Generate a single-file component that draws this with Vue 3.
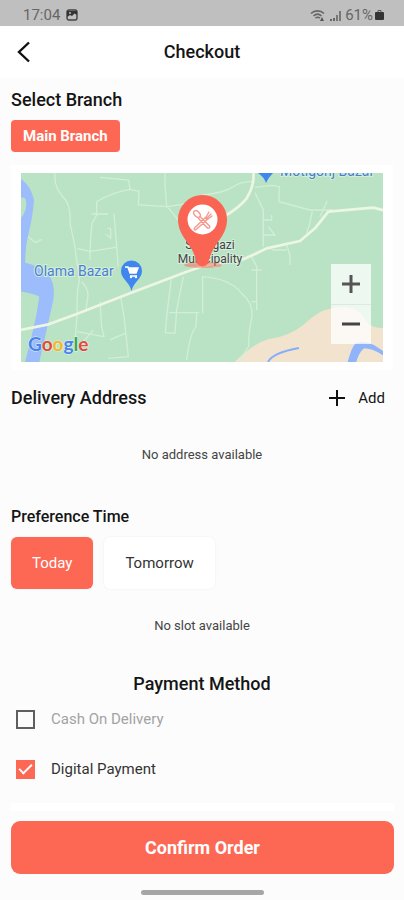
<template>
  <div class="screen">
    <div class="status-bar">
      <div class="status-group">
        <span>17:04</span>
        <svg width="12" height="12" viewBox="0 0 12 12">
          <rect x="1" y="1" width="10" height="10" rx="2" fill="none" stroke="#444" stroke-width="1.4" />
          <path d="M1 2h10v4L8.500 4.500 6 7 4 6 1 8z" fill="#333" />
          <circle cx="4" cy="4" r="1" fill="#bfbfbf" />
        </svg>
      </div>
      <div class="status-group status-right">
        <svg width="33" height="13" viewBox="0 0 33 13">
          <g fill="none" stroke="#666" stroke-width="1.600">
            <path d="M1 4.500C4.500 1 10.500 1 14 4.500" />
            <path d="M3.500 7C6 4.700 9 4.700 11.500 7" />
            <path d="M5.500 9.200C7 8 8.500 8 10 9.200" />
          </g>
          <path d="M10 12l2-4 2 4z" fill="#555" />
          <path d="M20 12v-2h2v2zM23 12V9h2v3z" fill="#666" />
          <path d="M26 12V6h2v6zM29 12V2h2v10z" fill="#777" />
        </svg>
        <span>61%</span>
        <svg width="9" height="12" viewBox="0 0 9 12">
          <path d="M3 3V1.500h3V3" fill="none" stroke="#555" />
          <rect y="3" width="9" height="8" rx="1" fill="#333" />
        </svg>
      </div>
    </div>

    <header class="header">
      <button class="back-button" type="button" aria-label="Back">
        <svg width="14" height="22" viewBox="0 0 14 22">
          <path d="M12 1.500L2 11l10 9.500" fill="none" stroke="#111" stroke-width="2.400" />
        </svg>
      </button>
      <h1 class="title">Checkout</h1>
    </header>

    <main class="content">
      <h2 class="heading">Select Branch</h2>
      <button class="branch-button" type="button">Main Branch</button>

      <section class="map-card">
        <div class="map">
          <svg class="map-canvas" viewBox="0 0 362 189" preserveAspectRatio="xMidYMid slice">
            <rect width="362" height="189" fill="#b9e3c4" />
            <g transform="translate(-21 -13) scale(0.3333)">
              <path fill="#9cbcfb" d="M60 55Q92 75 102 120Q98 170 88 210Q74 260 76 308Q115 316 148 348Q166 372 160 420L142 500L117 610H74L90 550L108 470L118 410Q105 402 60 394Z" />
              <path fill="#b9e3c4" d="M60 115Q78 105 79 130T60 178Z" />
              <path fill="#f2e3cf" d="M700 610Q760 550 805 538Q870 528 910 495Q960 450 985 448Q1070 425 1095 480Q1110 505 1155 505V610Z" />
              <path fill="none" stroke="#87aef8" stroke-width="6" d="M804 606Q818 578 897 564" />
              <path fill="#8fb4fa" d="M1042 610Q1055 560 1068 549Q1100 542 1122 555L1155 577V590Q1120 565 1092 565Q1075 580 1068 610Z" />
              <g class="minor-roads">
                <path d="M165 35Q160 80 190 112Q214 135 210 190L222 245L236 340L238 360Q228 410 232 460L226 530" />
                <path d="M290 125V165L276 190Q270 240 270 300M275 162h50M290 125Q340 95 390 88L386 60L300 52M385 88l32 5l-2 42L500 140L555 132M495 35V75L500 138L535 180" />
                <path d="M342 160L350 260L355 320M232 266l38 8l78-12M322 205h10v30l-14-12M85 230l22 18 18-10M245 365Q270 390 262 420L258 450" />
                <path d="M300 425L305 500L312 530L232 515M250 545L280 510M362 410L372 470L385 590L325 595M330 540L375 520" />
                <path d="M514 355L500 470L496 520M550 350L530 450L525 520L494 518M508 458h90M590 460L588 500Q570 520 560 600M608 350V460" />
                <path d="M606 105Q670 100 700 80Q720 65 760 64M765 98L790 150L790 260M765 82L815 76L838 80L837 125L930 150H1000M982 122L960 170M937 155L928 195L920 220M790 180h25v-15M790 225h35l-20-25M860 255l10 30v30M815 270h45M755 290l15 30v130M755 330h30M755 425h18" />
                <path d="M606 350Q690 355 725 400Q760 430 756 470Q745 520 746 560L720 600" />
              </g>
              <path class="major-road" d="M60 510L142 494L230 462L394 398L560 335L610 318L725 300L765 282L800 265L900 243L945 205L985 155L1120 143L1155 152" />
              <path class="major-road" d="M760 35Q765 75 740 115Q720 140 680 165L620 200" />
            </g>

            <text class="label blue" x="13" y="103" font-size="14">Olama Bazar</text>
            <path fill="#3f87ee" d="M110.500 87.500a10.500 10.500 0 0 1 10.500 10.500c0 8-8 10-10.500 20c-2.500-10-10.500-12-10.500-20a10.500 10.500 0 0 1 10.500-10.500z" />
            <path d="M104 94h3l2 6h6l2-5h-9M109 103h7" fill="#fff" stroke="#fff" stroke-width="1.500" />
            <circle cx="110" cy="104" r="1.200" fill="#fff" />
            <circle cx="115" cy="104" r="1.200" fill="#fff" />

            <path fill="#3f87ee" d="M237 0h15q-5 5-7 10q-2-6-8-10z" />
            <text class="label blue" x="259" y="3" font-size="14">Motigonj Bazar</text>

            <text class="label dark" x="189" y="76" font-size="12" text-anchor="middle">Sonagazi</text>
            <text class="label dark" x="189" y="90" font-size="12" text-anchor="middle">Municipality</text>

            <ellipse cx="182" cy="92" rx="19" ry="3" fill="#fb6554" opacity="0.5" />
            <path fill="#fa6453" d="M181.500 22a24.500 24.500 0 0 1 24.500 24.500c0 10-5 17-10 24c-5 7-7 12-9 20q-2.500 3-5.500 3t-5.500-3c-2-8-4-13-9-20c-5-7-10-14-10-24a24.500 24.500 0 0 1 24.500-24.500z" />
            <circle cx="181.500" cy="46.500" r="15" fill="#fff" />
            <g fill="none" stroke="#f5998e" stroke-width="1.400" stroke-linecap="round">
              <ellipse cx="176" cy="41" rx="2.500" ry="4" transform="rotate(-42 176 41)" />
              <path d="M179 43.500l9.500 9.500q1 2.500-2 2l-9-9.500M185 44l-11 10.500q-2 2 .5 2.500L187 46M185 44l3-5M186 45l4-4M187 46l4-3M185 44q-1 3 2 2" />
            </g>

            <text class="google" x="7" y="178" font-size="19">
              <tspan fill="#4a83ec">G</tspan><tspan fill="#e4493c">o</tspan><tspan fill="#f3b72c">o</tspan><tspan fill="#4a83ec">g</tspan><tspan fill="#3aa757">l</tspan><tspan fill="#e4493c">e</tspan>
            </text>
          </svg>
          <div class="zoom-controls">
            <button class="zoom-button" type="button" aria-label="Zoom in">
              <svg width="18" height="18" viewBox="0 0 18 18">
                <path d="M0 9h18M9 0v18" stroke="#555" stroke-width="3" />
              </svg>
            </button>
            <button class="zoom-button" type="button" aria-label="Zoom out">
              <svg width="18" height="18" viewBox="0 0 18 18">
                <path d="M0 8h18" stroke="#444" stroke-width="3" />
              </svg>
            </button>
          </div>
        </div>
      </section>

      <div class="address-row">
        <h2 class="heading">Delivery Address</h2>
        <button class="add-button" type="button">
          <svg width="16" height="16" viewBox="0 0 16 16">
            <path d="M0 8h16M8 0v16" stroke="#111" stroke-width="2" />
          </svg>
          Add
        </button>
      </div>
      <p class="empty address-empty">No address available</p>

      <h3 class="subheading">Preference Time</h3>
      <div class="days">
        <button
          v-for="day in days"
          :key="day"
          type="button"
          :class="['day-button', { active: day === selectedDay }]"
          @click="selectedDay = day"
        >
          {{ day }}
        </button>
      </div>
      <p class="empty slot-empty">No slot available</p>

      <h2 class="heading payment-heading">Payment Method</h2>
      <label
        v-for="method in methods"
        :key="method.id"
        :class="['method', { muted: payment !== method.id }]"
      >
        <input
          class="checkbox"
          type="checkbox"
          :checked="payment === method.id"
          @change="selectMethod(method.id, $event)"
        />
        <span>{{ method.name }}</span>
      </label>
    </main>

    <footer class="footer">
      <div class="footer-strip"></div>
      <button class="confirm-button" type="button">Confirm Order</button>
      <div class="home-indicator"></div>
    </footer>
  </div>
</template>

<script setup>
import { ref } from 'vue';

const days = ['Today', 'Tomorrow'];
const selectedDay = ref('Today');

const methods = [
  { id: 'cash', name: 'Cash On Delivery' },
  { id: 'digital', name: 'Digital Payment' },
];
const payment = ref('digital');

// Only one payment method can be active at a time
function selectMethod(id, event) {
  payment.value = id;
  event.target.checked = true;
}
</script>

<style>
body {
  margin: 0;
  background: #fcfcfc;
}
</style>

<style scoped>
.screen {
  display: flex;
  flex-direction: column;
  min-height: 100vh;
  font-family: Roboto, "Liberation Sans", sans-serif;
  color: #151515;
  background: #fcfcfc;
}

button {
  padding: 0;
  border: none;
  background: none;
  font-family: inherit;
  color: inherit;
  cursor: pointer;
}

svg {
  display: block;
}

.status-bar {
  display: flex;
  justify-content: space-between;
  align-items: center;
  height: 26px;
  padding: 4px 20px 0 23px;
  box-sizing: border-box;
  font-size: 15px;
  color: #666;
  background: #bfbfbf;
}

.status-group {
  display: flex;
  align-items: center;
  gap: 6px;
}

.status-right {
  gap: 2px;
}

.header {
  display: grid;
  grid-template-columns: 24px 1fr 24px;
  align-items: center;
  height: 52px;
  padding: 0 12px;
  background: #fff;
}

.back-button {
  display: flex;
  justify-content: center;
}

.title,
.heading {
  margin: 0;
  font-size: 18px;
  line-height: 24px;
  font-weight: 500;
}

.title {
  text-align: center;
}

.content {
  display: flex;
  flex-direction: column;
  flex: 1;
  padding: 10px 11px 0;
}

.branch-button {
  align-self: flex-start;
  height: 32px;
  margin-top: 8px;
  padding: 0 12px;
  border-radius: 4px;
  font-size: 15px;
  font-weight: 700;
  color: #fff;
  background: #fd6855;
}

.map-card {
  margin-top: 13px;
  padding: 8px 10px;
  background: #fff;
}

.map {
  position: relative;
}

.map-canvas {
  width: 100%;
  height: 189px;
}

.minor-roads {
  fill: none;
  stroke: #d2eed7;
  stroke-width: 4px;
}

.major-road {
  fill: none;
  stroke: #edf6e3;
  stroke-width: 8px;
  stroke-linejoin: round;
}

.label {
  font-family: Roboto, sans-serif;
  paint-order: stroke;
  stroke: #d6efdc;
  stroke-width: 2px;
}

.blue {
  fill: #4a80cf;
}

.dark {
  fill: #444;
}

.google {
  font-family: Lato, sans-serif;
  font-weight: 700;
  paint-order: stroke;
  stroke: #e6f4e8;
  stroke-width: 1px;
}

.zoom-controls {
  position: absolute;
  right: 12px;
  bottom: 18px;
  display: flex;
  flex-direction: column;
  background: rgba(255, 255, 255, 0.75);
}

.zoom-button {
  display: flex;
  justify-content: center;
  align-items: center;
  width: 40px;
  height: 40px;
}

.zoom-button + .zoom-button {
  border-top: 1px solid rgba(0, 0, 0, 0.06);
}

.address-row {
  display: flex;
  justify-content: space-between;
  align-items: center;
  margin-top: 16px;
  padding-right: 8px;
}

.add-button {
  display: flex;
  align-items: center;
  gap: 13px;
  font-size: 15px;
  line-height: 24px;
}

.empty {
  margin: 0;
  text-align: center;
  font-size: 13px;
  line-height: 20px;
  color: #444;
}

.address-empty {
  margin-top: 35px;
}

.subheading {
  margin: 42px 0 0;
  font-size: 16px;
  line-height: 20px;
  font-weight: 500;
}

.days {
  display: flex;
  gap: 11px;
  margin-top: 10px;
}

.day-button {
  height: 52px;
  padding: 0 21px;
  border-radius: 6px;
  font-size: 15px;
  color: #333;
  background: #fff;
  box-shadow: 0 0 2px rgba(0, 0, 0, 0.08);
}

.day-button.active {
  color: #fff;
  background: #fd6855;
}

.slot-empty {
  margin-top: 27px;
}

.payment-heading {
  margin-top: 36px;
  text-align: center;
}

.method {
  display: flex;
  align-items: center;
  gap: 16px;
  height: 50px;
  padding-left: 5px;
  font-size: 15px;
  color: #333;
  cursor: pointer;
}

.payment-heading + .method {
  margin-top: -2px;
}

.method.muted {
  color: #a3a3a3;
}

.checkbox {
  appearance: none;
  display: grid;
  place-items: center;
  width: 19px;
  height: 19px;
  margin: 0;
  box-sizing: border-box;
  border: 2px solid #5f5f5f;
}

.checkbox:checked {
  border-color: #fd6855;
  background: #fd6855;
}

.checkbox:checked::after {
  content: "";
  width: 11px;
  height: 5px;
  margin-bottom: 4px;
  border-bottom: 2px solid #fff;
  border-left: 2px solid #fff;
  transform: rotate(-45deg);
}

.footer {
  padding: 0 10px 5px 11px;
}

.footer-strip {
  height: 8px;
  margin-bottom: 10px;
  background: #fff;
}

.confirm-button {
  display: block;
  width: 100%;
  height: 53px;
  border-radius: 9px;
  font-size: 18px;
  font-weight: 700;
  color: #fff;
  background: #fd6855;
}

.home-indicator {
  width: 32%;
  height: 5px;
  margin: 16px auto 0;
  border-radius: 3px;
  background: #a6a6a6;
}
</style>
